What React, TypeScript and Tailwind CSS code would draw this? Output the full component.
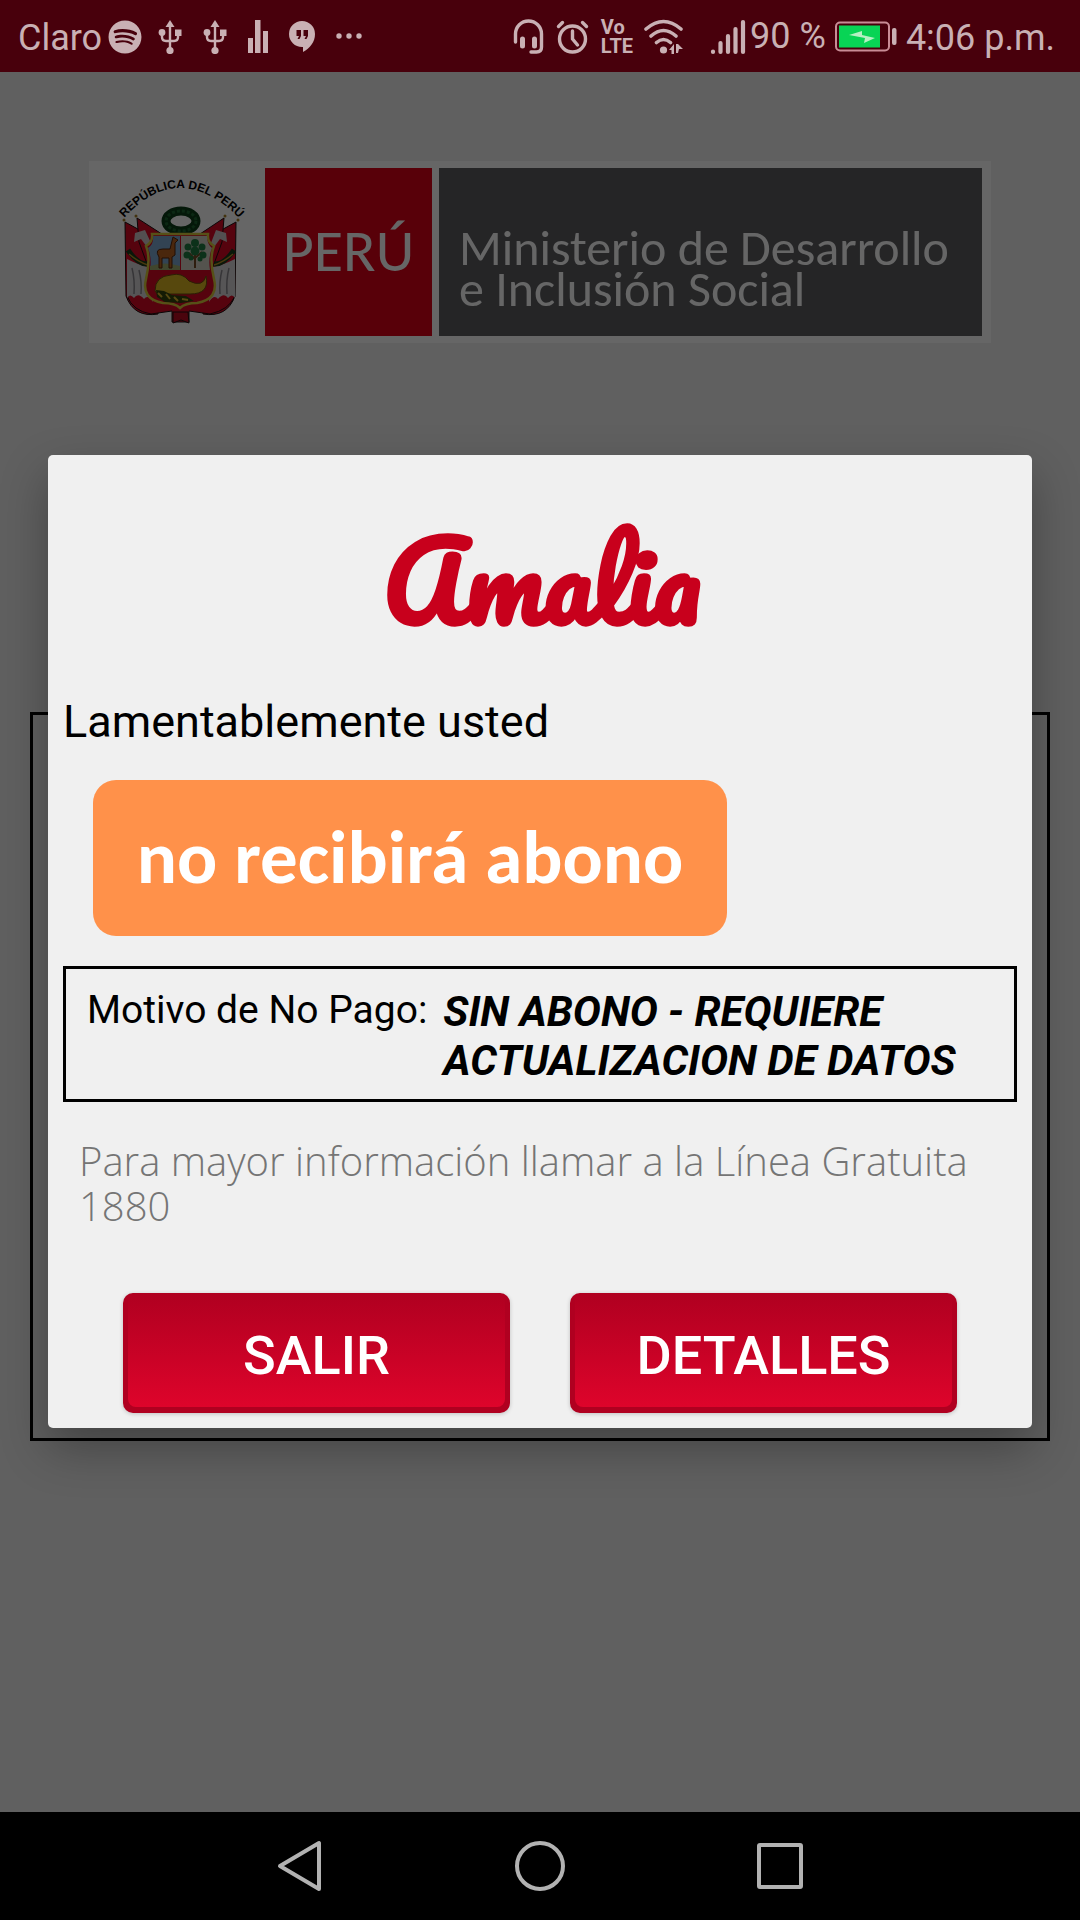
import React from 'react';
import { FaSpotify } from 'react-icons/fa';

const UsbIcon = () => (
  <svg width="24" height="34" viewBox="0 0 24 34" fill="none" stroke="currentColor" strokeWidth="2.4">
    <path d="M12 5v24M4 13v4q0 4 4 4h8q4 0 4-4v-4" />
    <path d="M12 0l4.500 7h-9z" fill="currentColor" stroke="none" />
    <circle cx="4" cy="12.500" r="3.400" fill="currentColor" stroke="none" />
    <path d="M17 9.500h6.500V16H17z" fill="currentColor" stroke="none" />
    <circle cx="12" cy="30.500" r="3.600" fill="currentColor" stroke="none" />
  </svg>
);

const BarsIcon = () => (
  <svg width="20" height="34" viewBox="0 0 20 34" fill="currentColor">
    <path d="M0 18h5v15H0zM7 0h5.500v33H7zM15 11h5v22h-5z" />
  </svg>
);

const HangoutsIcon = () => (
  <svg width="26" height="32" viewBox="0 0 26 32" fill="currentColor">
    <path
      fillRule="evenodd"
      d="M13 0a13 13 0 0 1 13 13c0 8-5 14-12 18v-5h-1A13 13 0 0 1 13 0zM7.500 9v6H10l-1.500 3h2l1.500-3V9zM14.500 9v6H17l-1.500 3h2l1.500-3V9z"
    />
  </svg>
);

const DotsIcon = () => (
  <svg width="26" height="34" viewBox="0 0 26 34" fill="currentColor">
    <circle cx="3" cy="16" r="2.700" />
    <circle cx="13" cy="16" r="2.700" />
    <circle cx="23" cy="16" r="2.700" />
  </svg>
);

const HeadsetIcon = () => (
  <svg width="32" height="36" viewBox="0 0 32 36" fill="none" stroke="currentColor" strokeLinecap="round">
    <path d="M2.500 23v-8A13 13 0 0 1 28.500 15v13q0 5-5 5H18" strokeWidth="3.400" />
    <path d="M9.500 20v7M21.500 20v7" strokeWidth="5" />
  </svg>
);

const AlarmIcon = () => (
  <svg width="34" height="36" viewBox="0 0 34 36" fill="none" stroke="currentColor" strokeWidth="3.400" strokeLinecap="round">
    <circle cx="16.500" cy="20" r="13" />
    <path d="M16.500 12v8l5 6M2.500 7.500l4-4M30.500 7.500l-4-4" />
  </svg>
);

const WifiIcon = () => (
  <svg width="40" height="36" viewBox="0 0 40 36" fill="none" stroke="currentColor" strokeWidth="3.600" strokeLinecap="round">
    <path d="M2 10Q19.500-5 37 10M7 17q12.500-11 25 0M12.500 23.500q7-6 14 0" />
    <circle cx="19.500" cy="31" r="3.600" fill="currentColor" stroke="none" />
    <path d="M30 25v10h-2.500v-4H25zM32 25h2l5 5h-4l-1 4h-2z" fill="currentColor" stroke="none" />
  </svg>
);

const SignalIcon = () => (
  <svg width="36" height="36" viewBox="0 0 36 36" stroke="currentColor" strokeWidth="4.200" strokeLinecap="round">
    <path d="M3 32.500v.5M10.500 24v9M18 17v16M25.500 10v23M33 3v30" />
  </svg>
);

const BatteryIcon = () => (
  <svg width="62" height="32" viewBox="0 0 62 32" fill="none">
    <rect x="1" y="1.500" width="53" height="28" rx="4" stroke="#c98c96" strokeWidth="2" />
    <rect x="4" y="4.500" width="41" height="22" fill="#08d455" />
    <path d="M14 14l13-4v4l13 3-11 5 1-5z" fill="#b6f0c4" />
    <rect x="57" y="7" width="4.500" height="17" rx="2" fill="#c9b0b4" />
  </svg>
);

const CoatOfArms = () => (
  <svg width="145" height="160" viewBox="0 0 145 160" role="img" aria-label="Escudo del Perú">
    <defs>
      <path id="crest-arc" d="M11 52Q70-20 137 52" />
    </defs>
    <text fontFamily="Liberation Sans" fontSize="12" fontWeight="700" fill="#000">
      <textPath href="#crest-arc" startOffset="50%" textAnchor="middle">REPÚBLICA DEL PERÚ</textPath>
    </text>
    {/* flags */}
    <g stroke="#1c1010" strokeWidth="1">
      <path d="M17 50L50 68v74q-24 4-32-18z" fill="#d80825" />
      <path d="M128 50L95 68v74q24 4 32-18z" fill="#d80825" />
      <path d="M29 46L60 66 42 100 31 70z" fill="#d80825" />
      <path d="M116 46L86 66l17 34 11-30z" fill="#d80825" />
      <path d="M19 124q6 15 24 18l21-3v11h17v-11l21 3q19-4 25-18l-25-9H43z" fill="#d80825" />
    </g>
    <path d="M19 87q12 6 21 8l5 35q-5-8-9-3-6-7-10-1-4-5-7 0zM127 87q-12 6-22 8l-4 35q5-8 9-3 6-7 10-1 4-5 7 0z" fill="#d8d4d6" />
    <path d="M24 96q3 12 2 26M31 98q3 12 2 24M121 96q-3 12-2 26M114 98q-3 12-2 24" fill="none" stroke="#88868c" strokeWidth="1.500" />
    <path d="M27 61l10-3 6 13-4 4-6-8-7 3zM118 61l-10-3-5 13 3 4 6-8 7 3z" fill="#cfc6c8" />
    <path d="M20 78q10 15 20 14M126 78q-10 15-20 14" fill="none" stroke="#1a3a1a" strokeWidth="5" />
    <path d="M21 82q9 8 19 11M125 82q-9 8-19 11" fill="none" stroke="#b78d23" strokeWidth="1.500" />
    {/* wreath */}
    <ellipse cx="73" cy="49" rx="15" ry="10" fill="none" stroke="#0c3c18" strokeWidth="9" />
    <ellipse cx="73" cy="49" rx="15" ry="10" fill="none" stroke="#1c6430" strokeWidth="3" strokeDasharray="3 2" />
    {/* shield */}
    <path d="M44 62h56q-1 8 6 12-5 12 0 33 5 20-17 24-12 0-17 5-5-5-17-5-22-4-17-24 5-21 0-33 7-4 6-12z" fill="#d80825" stroke="#d8c83a" strokeWidth="2.500" />
    <path d="M45 64h27v34H42q2-12-2-22 6-4 5-12z" fill="#7da7cf" />
    <path d="M73 64h26q0 8 5 12-4 10-2 22H73z" fill="#d2cfc4" />
    <path d="M42 94q15-5 30 0v4H42z" fill="#a1ac72" />
    <path d="M65 65l5 3-3 3v12l-3 2v11h-3v-10h-7v10h-3V85q-5-8 4-8h7z" fill="#ba6221" stroke="#54250b" strokeWidth="1" />
    <path d="M87 82v14M87 87l-6-6M87 86l7-6" stroke="#744923" strokeWidth="2" fill="none" />
    <g fill="#207c43">
      <circle cx="80" cy="75" r="3.500" />
      <circle cx="87" cy="71" r="4" />
      <circle cx="94" cy="75" r="3.500" />
      <circle cx="79" cy="83" r="3.500" />
      <circle cx="95" cy="83" r="3.500" />
      <circle cx="87" cy="79" r="4.500" />
      <circle cx="83" cy="86" r="2.500" />
      <circle cx="92" cy="87" r="2.500" />
    </g>
    <path d="M47 119q0-15 16-16 11-3 18 6 14 7 17-5 4 18-16 18H60q-9 4-13-3z" fill="#d9b521" stroke="#6b4e0a" strokeWidth="1" />
    <path d="M48 118l8 1 8 4 14 1 8 5-13 2-16-1-8-5z" fill="#34440b" />
    <path d="M50 121l4 4M58 122l4 5M66 125l4 4M74 127l6 1" stroke="#d6b62e" strokeWidth="2" />
    <path d="M65 140h15l1 11-8-3-8 3z" fill="#b80b22" stroke="#1c1010" strokeWidth="1" />
    <circle cx="16" cy="48" r="1.500" fill="#a98127" />
    <circle cx="28" cy="44" r="1.500" fill="#a98127" />
    <circle cx="117" cy="44" r="1.500" fill="#a98127" />
    <circle cx="130" cy="48" r="1.500" fill="#a98127" />
  </svg>
);

const StatusBar = () => (
  <header className="flex h-[72px] items-center justify-between bg-[#48000c] pt-[2px] pr-[25px] pl-[18px] text-[#c9b0b4]">
    <div className="flex items-center">
      <span className="pt-[2px] text-[36px] leading-[42px]">Claro</span>
      <FaSpotify className="ml-[6px] size-[34px]" />
      <div className="ml-4 flex items-center gap-[21px]">
        <UsbIcon />
        <UsbIcon />
        <BarsIcon />
        <HangoutsIcon />
        <DotsIcon />
      </div>
    </div>
    <div className="flex items-center">
      <div className="flex items-center gap-[11px]">
        <HeadsetIcon />
        <AlarmIcon />
        <span className="flex flex-col text-[20px] leading-[19px] font-bold">
          <span>Vo</span>
          <span>LTE</span>
        </span>
        <WifiIcon />
      </div>
      <span className="ml-[26px]">
        <SignalIcon />
      </span>
      <span className="ml-1 pb-[2px] text-[36px] leading-[42px]">90 %</span>
      <span className="mr-[9px] ml-[9px]">
        <BatteryIcon />
      </span>
      <span className="pt-[2px] text-[36px] leading-[42px]">4:06 p.m.</span>
    </div>
  </header>
);

const MinistryBanner = () => (
  <div className="mx-[89px] flex h-[182px] bg-white py-[7px] pr-[9px]">
    <div className="flex w-[176px] items-center justify-center pl-[6px]">
      <CoatOfArms />
    </div>
    <div className="flex w-[167px] items-center justify-center bg-[#dc0018] pb-[2px] font-['Calibri','Carlito','Open_Sans',sans-serif] text-[60px] text-white">
      PERÚ
    </div>
    <div className="ml-[7px] flex flex-1 flex-col justify-end bg-[#5c5d60] pb-[27px] pl-5 font-['Calibri','Carlito','Open_Sans',sans-serif] text-[50px] leading-[41px] whitespace-nowrap text-white">
      <span>Ministerio de Desarrollo</span>
      <span>e Inclusión Social</span>
    </div>
  </div>
);

interface ActionButtonProps {
  children: React.ReactNode;
}

const ActionButton: React.FC<ActionButtonProps> = ({ children }) => (
  <button
    type="button"
    className="h-[120px] flex-1 rounded-[10px] bg-[#b00020] px-[5px] pb-[6px] text-[54px] font-medium text-white shadow-[0_1px_4px_rgba(0,0,0,0.2)]"
  >
    <span className="flex h-full items-center justify-center rounded-[8px] bg-linear-to-b from-[#b00020] to-[#de042b] pt-[10px]">
      {children}
    </span>
  </button>
);

const PaymentDialog = () => (
  <section
    role="dialog"
    aria-modal="true"
    aria-labelledby="dialog-title"
    className="flex w-full flex-col rounded-[5px] bg-[#f0f0f0] px-[15px] pb-[15px] text-black shadow-[0_20px_48px_rgba(0,0,0,0.3)]"
  >
    <h1
      id="dialog-title"
      className="mt-[55px] pl-1 text-center font-['Pacifico','Lato',cursive] text-[105px] leading-[140px] font-bold text-[#c8001c]"
    >
      Amalia
    </h1>
    <p className="mt-[45px] text-[45px] leading-[54px]">Lamentablemente usted</p>
    <p className="mt-[31px] ml-[30px] flex h-[156px] w-[634px] items-center justify-center rounded-[23px] bg-[#ff914a] font-['Calibri','Carlito','Open_Sans',sans-serif] text-[75px] font-bold text-white">
      no recibirá abono
    </p>
    <div className="mt-[30px] flex h-[136px] gap-4 border-3 border-black pt-[18px] pl-[21px]">
      <span className="text-[39px] leading-[46px] whitespace-nowrap">Motivo de No Pago:</span>
      <strong className="text-[42px] leading-[49px] font-bold italic">
        SIN ABONO - REQUIERE
        <br />
        ACTUALIZACION DE DATOS
      </strong>
    </div>
    <p className="mt-[36px] pl-4 font-['Open_Sans',sans-serif] text-[40px] leading-[45px] font-light text-[#757575]">
      Para mayor información llamar a la Línea Gratuita 1880
    </p>
    <div className="mt-[65px] flex gap-[60px] px-[60px]">
      <ActionButton>SALIR</ActionButton>
      <ActionButton>DETALLES</ActionButton>
    </div>
  </section>
);

const NavBar = () => (
  <nav className="flex h-[108px] items-center justify-center gap-[190px] bg-black text-[#b2b2b2]">
    <button type="button" aria-label="Atrás">
      <svg width="50" height="52" viewBox="0 0 50 52" fill="none" stroke="currentColor" strokeWidth="4" strokeLinejoin="round">
        <path d="M45 3v46L6 26z" />
      </svg>
    </button>
    <button type="button" aria-label="Inicio">
      <svg width="52" height="52" viewBox="0 0 52 52" fill="none" stroke="currentColor" strokeWidth="4">
        <circle cx="26" cy="26" r="23" />
      </svg>
    </button>
    <button type="button" aria-label="Recientes">
      <svg width="50" height="52" viewBox="0 0 50 52" fill="none" stroke="currentColor" strokeWidth="4" strokeLinejoin="round">
        <rect x="3" y="5" width="42" height="42" rx="1" />
      </svg>
    </button>
  </nav>
);

export default function App() {
  return (
    <div className="flex min-h-screen flex-col bg-black font-['Roboto',sans-serif]">
      <StatusBar />
      <main className="relative flex-1 bg-[#f0f0f0]">
        <div className="flex flex-col pt-[89px]">
          <MinistryBanner />
          <div className="mx-[30px] mt-[369px] h-[729px] border-3 border-black" />
        </div>
        {/* scrim */}
        <div className="absolute inset-0 flex items-center bg-black/60 px-[48px] pb-px">
          <PaymentDialog />
        </div>
      </main>
      <NavBar />
    </div>
  );
}
